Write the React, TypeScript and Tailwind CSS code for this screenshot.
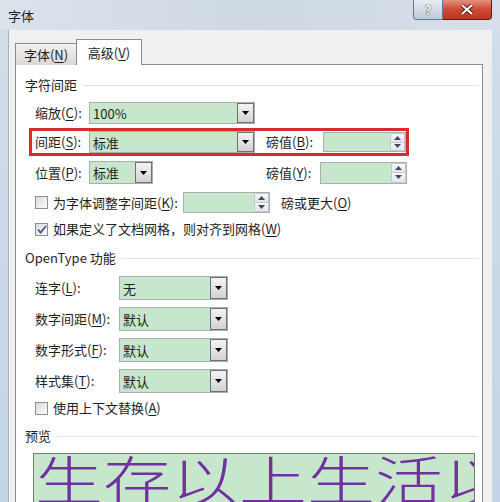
import React from "react";

const GREEN = "bg-[#c7e7cd]";

function K({ text, k }: { text: string; k: string }) {
  // label with underlined access key, e.g. 间距(S):
  const [before, after] = text.split("#");
  return (
    <span className="whitespace-nowrap">
      {before}(<span className="underline underline-offset-2">{k}</span>){after}
    </span>
  );
}

function Arrow() {
  return (
    <svg width="7" height="4" viewBox="0 0 7 4">
      <path d="M0 0h7L3.5 4z" fill="#000" />
    </svg>
  );
}

function Combo({ value, className }: { value?: string; className: string }) {
  return (
    <div className={`flex border border-[#abadb3] ${GREEN} ${className}`}>
      <div className="flex-1 pl-[3px] flex items-center leading-none">{value}</div>
      <div className="w-[17px] flex items-center justify-center border border-[#707070] bg-linear-to-b from-[#f3f3f3] to-[#d2d2d2]">
        <Arrow />
      </div>
    </div>
  );
}

function Spinner({ className }: { className: string }) {
  return (
    <div className={`flex border border-[#abadb3] ${GREEN} ${className}`}>
      <div className="flex-1" />
      <div className="w-[15px] flex flex-col">
        <div className="flex-1 flex items-center justify-center border border-[#c5c9cf] bg-linear-to-b from-[#f7f8fa] to-[#e2e6eb]">
          <svg width="7" height="4" viewBox="0 0 7 4">
            <path d="M3.5 0L7 4H0z" fill="#3c4a63" />
          </svg>
        </div>
        <div className="flex-1 flex items-center justify-center border border-t-0 border-[#c5c9cf] bg-linear-to-b from-[#f7f8fa] to-[#e2e6eb]">
          <svg width="7" height="4" viewBox="0 0 7 4">
            <path d="M0 0h7L3.5 4z" fill="#3c4a63" />
          </svg>
        </div>
      </div>
    </div>
  );
}

function Check({ checked }: { checked?: boolean }) {
  return (
    <div className="w-[13px] h-[13px] border border-[#8e8f8f] bg-linear-to-br from-[#dcdcdc] to-[#fbfbfb] flex items-center justify-center">
      {checked && (
        <svg width="10" height="9" viewBox="0 0 10 9">
          <path d="M1 4.5l2.6 3L9 1" stroke="#3b5a9a" strokeWidth="1.8" fill="none" />
        </svg>
      )}
    </div>
  );
}

function Section({ title }: { title: string }) {
  return (
    <div className="flex items-center h-[20px]">
      <span>{title}</span>
      <div className="flex-1 h-px bg-[#e0e0e0] ml-[6px] mr-[4px]" />
    </div>
  );
}

export default function App() {
  return (
    <div className="w-[500px] h-[502px] overflow-hidden bg-linear-to-b from-[#d3dee9] to-[#c3d4e8] font-['Noto_Sans_CJK_SC',sans-serif] text-[13px] text-[#1e1e1e]">
      {/* title bar */}
      <div className="h-[30px] relative bg-linear-to-r from-[#dbe3ec] via-[#cfd9e4] to-[#d6dfe9]">
        <span className="absolute left-[8px] top-[6px] leading-[20px]">字体</span>
        <div className="absolute right-[8px] top-0 flex">
          <div className="w-[30px] h-[20px] border border-t-0 border-[#6b7b8e] rounded-bl-[4px] bg-linear-to-b from-[#e9eef4] to-[#bccadb] flex items-center justify-center">
            <span className="text-[13px] font-bold leading-none text-white [text-shadow:0_0_1px_#333,0_0_1px_#333]">?</span>
          </div>
          <div className="w-[49px] h-[20px] border border-l-0 border-t-0 border-[#5a2018] rounded-br-[4px] bg-linear-to-b from-[#e6907f] via-[#cc4a33] to-[#c0341f] flex items-center justify-center">
            <svg width="14" height="11" viewBox="0 0 14 11">
              <path d="M2 1l10 9M12 1L2 10" stroke="#4a1a12" strokeWidth="4" />
              <path d="M2 1l10 9M12 1L2 10" stroke="#fff" strokeWidth="2.2" />
            </svg>
          </div>
        </div>
      </div>

      {/* dialog body */}
      <div className="mx-[8px] h-[472px] bg-[#f0f0f0] border-l border-[#a4b3c4] pt-[10px] pl-[6px] pr-[9px]">
        {/* tabs */}
        <div className="flex items-end h-[25px] relative z-10 -mb-px">
          <div className="w-[62px] h-[22px] border border-b-0 border-[#898c95] bg-linear-to-b from-[#f2f2f2] to-[#d9d9d9] flex items-center justify-center">
            <K text="字体#" k="N" />
          </div>
          <div className="w-[66px] h-[26px] border border-b-0 border-[#898c95] bg-white flex items-center justify-center -ml-px">
            <K text="高级#" k="V" />
          </div>
        </div>

        {/* panel */}
        <div className="h-[460px] border border-[#898c95] bg-white pl-[9px] pt-[10px]">
          <Section title="字符间距" />

          <div className="ml-[10px] mt-[7px] flex items-center h-[22px]">
            <div className="w-[54px]">
              <K text="缩放#:" k="C" />
            </div>
            <Combo value="100%" className="w-[166px] h-[22px]" />
          </div>

          <div className="ml-[4px] mt-[4px] w-[380px] h-[28px] border-[3px] border-[#d62d2a] flex items-center pl-[3px]">
            <div className="w-[54px]">
              <K text="间距#:" k="S" />
            </div>
            <Combo value="标准" className="w-[166px] h-[22px]" />
            <div className="w-[57px] ml-[11px]">
              <K text="磅值#:" k="B" />
            </div>
            <Spinner className="w-[83px] h-[20px]" />
          </div>

          <div className="ml-[10px] mt-[5px] flex items-center h-[23px]">
            <div className="w-[54px]">
              <K text="位置#:" k="P" />
            </div>
            <Combo value="标准" className="w-[64px] h-[23px]" />
            <div className="w-[54px] ml-[113px]">
              <K text="磅值#:" k="Y" />
            </div>
            <Spinner className="w-[87px] h-[22px]" />
          </div>

          <div className="ml-[10px] mt-[8px] flex items-center h-[21px]">
            <Check />
            <div className="w-[135px] pl-[5px]">
              <K text="为字体调整字间距#:" k="K" />
            </div>
            <Spinner className="w-[87px] h-[21px]" />
            <div className="ml-[11px]">
              <K text="磅或更大#" k="O" />
            </div>
          </div>

          <div className="ml-[10px] mt-[6px] flex items-center h-[20px]">
            <Check checked />
            <div className="pl-[5px]">
              <K text="如果定义了文档网格，则对齐到网格#" k="W" />
            </div>
          </div>

          <div className="mt-[9px]">
            <Section title="OpenType 功能" />
          </div>

          <div className="ml-[10px] mt-[8px] flex items-center h-[24px]">
            <div className="w-[84px]">
              <K text="连字#:" k="L" />
            </div>
            <Combo value="无" className="w-[109px] h-[24px]" />
          </div>
          <div className="ml-[10px] mt-[7px] flex items-center h-[24px]">
            <div className="w-[84px]">
              <K text="数字间距#:" k="M" />
            </div>
            <Combo value="默认" className="w-[109px] h-[24px]" />
          </div>
          <div className="ml-[10px] mt-[7px] flex items-center h-[24px]">
            <div className="w-[84px]">
              <K text="数字形式#:" k="F" />
            </div>
            <Combo value="默认" className="w-[109px] h-[24px]" />
          </div>
          <div className="ml-[10px] mt-[7px] flex items-center h-[24px]">
            <div className="w-[84px]">
              <K text="样式集#:" k="T" />
            </div>
            <Combo value="默认" className="w-[109px] h-[24px]" />
          </div>

          <div className="ml-[10px] mt-[5px] flex items-center h-[20px]">
            <Check />
            <div className="pl-[5px]">
              <K text="使用上下文替换#" k="A" />
            </div>
          </div>

          <div className="mt-[8px]">
            <Section title="预览" />
          </div>

          <div className={`ml-[8px] mt-[7px] w-[442px] h-[70px] border border-[#6f7f70] ${GREEN} overflow-hidden`}>
            <div className="pl-[1px] -mt-[2px] whitespace-nowrap text-[68px] leading-none font-light text-[#7030a0] scale-y-[0.78] origin-top">
              生存以上生活以
            </div>
          </div>
        </div>
      </div>
    </div>
  );
}
